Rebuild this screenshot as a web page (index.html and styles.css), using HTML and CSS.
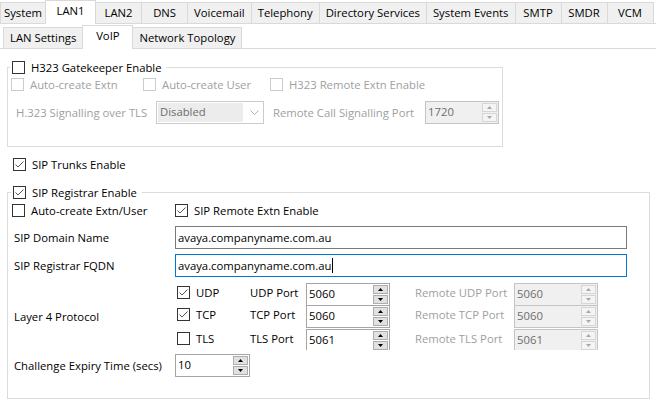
FILE: index.html
```html
<!DOCTYPE html>
<html lang="en">
<head>
    <meta charset="UTF-8">
    <title>LAN1 - VoIP</title>
    <link rel="stylesheet" href="styles.css">
</head>
<body>
    <div class="tabs tabs-top">
        <div class="tab first">System</div>
        <div class="tab sel">LAN1</div>
        <div class="tab">LAN2</div>
        <div class="tab">DNS</div>
        <div class="tab">Voicemail</div>
        <div class="tab">Telephony</div>
        <div class="tab">Directory Services</div>
        <div class="tab">System Events</div>
        <div class="tab">SMTP</div>
        <div class="tab">SMDR</div>
        <div class="tab">VCM</div>
    </div>
    <div class="tabs tabs-sub">
        <div class="tab">LAN Settings</div>
        <div class="tab sel">VoIP</div>
        <div class="tab">Network Topology</div>
    </div>

    <div class="page">
        <fieldset class="group group-h323">
            <legend><span class="check"><span class="cb"></span>H323 Gatekeeper Enable</span></legend>
            <div class="h323-opts">
                <span class="check off"><span class="cb"></span>Auto-create Extn</span>
                <span class="check off"><span class="cb"></span>Auto-create User</span>
                <span class="check off"><span class="cb"></span>H323 Remote Extn Enable</span>
            </div>
            <div class="h323-tls">
                <span class="lbl off tls-lbl">H.323 Signalling over TLS</span>
                <div class="combo">
                    <span class="combo-val">Disabled</span>
                    <svg class="chev" width="9" height="5" viewBox="0 0 9 5"><polyline points="0.5,0.5 4.5,4.5 8.5,0.5" fill="none" stroke="#b4b4b4"/></svg>
                </div>
                <span class="lbl off port-lbl">Remote Call Signalling Port</span>
                <div class="spin off spin-h323">
                    <span class="spin-val">1720</span>
                    <span class="spin-btns">
                        <span><svg width="5" height="3" viewBox="0 0 5 3"><polygon points="2.5,0 5,3 0,3"/></svg></span>
                        <span><svg width="5" height="3" viewBox="0 0 5 3"><polygon points="0,0 5,0 2.5,3"/></svg></span>
                    </span>
                </div>
            </div>
        </fieldset>

        <div class="trunks">
            <span class="check"><span class="cb"><svg width="11" height="11" viewBox="0 0 11 11"><polyline points="1.5,5.5 4,8 9.5,2.5" fill="none" stroke="#555"/></svg></span>SIP Trunks Enable</span>
        </div>

        <fieldset class="group group-sip">
            <legend><span class="check"><span class="cb"><svg width="11" height="11" viewBox="0 0 11 11"><polyline points="1.5,5.5 4,8 9.5,2.5" fill="none" stroke="#555"/></svg></span>SIP Registrar Enable</span></legend>

            <div class="sip-opts">
                <span class="check opt-auto"><span class="cb"></span>Auto-create Extn/User</span>
                <span class="check"><span class="cb"><svg width="11" height="11" viewBox="0 0 11 11"><polyline points="1.5,5.5 4,8 9.5,2.5" fill="none" stroke="#555"/></svg></span>SIP Remote Extn Enable</span>
            </div>

            <div class="field-row row-domain">
                <span class="lbl row-lbl">SIP Domain Name</span>
                <div class="field">avaya.companyname.com.au</div>
            </div>

            <div class="field-row row-fqdn">
                <span class="lbl row-lbl">SIP Registrar FQDN</span>
                <div class="field focus">avaya.companyname.com.au<span class="caret"></span></div>
            </div>

            <div class="field-row row-proto">
                <span class="lbl row-lbl">Layer 4 Protocol</span>
                <div class="proto">
                    <span class="check"><span class="cb"><svg width="11" height="11" viewBox="0 0 11 11"><polyline points="1.5,5.5 4,8 9.5,2.5" fill="none" stroke="#555"/></svg></span>UDP</span>
                    <span class="lbl">UDP Port</span>
                    <div class="spin">
                        <span class="spin-val">5060</span>
                        <span class="spin-btns">
                            <span><svg width="5" height="3" viewBox="0 0 5 3"><polygon points="2.5,0 5,3 0,3"/></svg></span>
                            <span><svg width="5" height="3" viewBox="0 0 5 3"><polygon points="0,0 5,0 2.5,3"/></svg></span>
                        </span>
                    </div>
                    <span class="lbl off">Remote UDP Port</span>
                    <div class="spin off">
                        <span class="spin-val">5060</span>
                        <span class="spin-btns">
                            <span><svg width="5" height="3" viewBox="0 0 5 3"><polygon points="2.5,0 5,3 0,3"/></svg></span>
                            <span><svg width="5" height="3" viewBox="0 0 5 3"><polygon points="0,0 5,0 2.5,3"/></svg></span>
                        </span>
                    </div>

                    <span class="check"><span class="cb"><svg width="11" height="11" viewBox="0 0 11 11"><polyline points="1.5,5.5 4,8 9.5,2.5" fill="none" stroke="#555"/></svg></span>TCP</span>
                    <span class="lbl">TCP Port</span>
                    <div class="spin">
                        <span class="spin-val">5060</span>
                        <span class="spin-btns">
                            <span><svg width="5" height="3" viewBox="0 0 5 3"><polygon points="2.5,0 5,3 0,3"/></svg></span>
                            <span><svg width="5" height="3" viewBox="0 0 5 3"><polygon points="0,0 5,0 2.5,3"/></svg></span>
                        </span>
                    </div>
                    <span class="lbl off">Remote TCP Port</span>
                    <div class="spin off">
                        <span class="spin-val">5060</span>
                        <span class="spin-btns">
                            <span><svg width="5" height="3" viewBox="0 0 5 3"><polygon points="2.5,0 5,3 0,3"/></svg></span>
                            <span><svg width="5" height="3" viewBox="0 0 5 3"><polygon points="0,0 5,0 2.5,3"/></svg></span>
                        </span>
                    </div>

                    <span class="check"><span class="cb"></span>TLS</span>
                    <span class="lbl">TLS Port</span>
                    <div class="spin">
                        <span class="spin-val">5061</span>
                        <span class="spin-btns">
                            <span><svg width="5" height="3" viewBox="0 0 5 3"><polygon points="2.5,0 5,3 0,3"/></svg></span>
                            <span><svg width="5" height="3" viewBox="0 0 5 3"><polygon points="0,0 5,0 2.5,3"/></svg></span>
                        </span>
                    </div>
                    <span class="lbl off">Remote TLS Port</span>
                    <div class="spin off">
                        <span class="spin-val">5061</span>
                        <span class="spin-btns">
                            <span><svg width="5" height="3" viewBox="0 0 5 3"><polygon points="2.5,0 5,3 0,3"/></svg></span>
                            <span><svg width="5" height="3" viewBox="0 0 5 3"><polygon points="0,0 5,0 2.5,3"/></svg></span>
                        </span>
                    </div>
                </div>
            </div>

            <div class="field-row row-chal">
                <span class="lbl row-lbl">Challenge Expiry Time (secs)</span>
                <div class="spin spin-chal">
                    <span class="spin-val">10</span>
                    <span class="spin-btns">
                        <span><svg width="5" height="3" viewBox="0 0 5 3"><polygon points="2.5,0 5,3 0,3"/></svg></span>
                        <span><svg width="5" height="3" viewBox="0 0 5 3"><polygon points="0,0 5,0 2.5,3"/></svg></span>
                    </span>
                </div>
            </div>
        </fieldset>
    </div>
</body>
</html>
```

FILE: styles.css
```css
body {
    margin: 0;
    width: 656px;
    height: 401px;
    overflow: hidden;
    background-color: #fff;
    font-family: "Open Sans", "Noto Sans", sans-serif;
    font-size: 11.3px;
    color: #000;
}

/* tab strips */
.tabs {
    display: flex;
    align-items: flex-end;
    border-bottom: 1px solid #d9d9d9;
}

.tabs-top {
    height: 23px;
}

.tabs-sub {
    height: 24px;
    padding-left: 3px;
}

.tab {
    height: 21px;
    min-width: 47px;
    box-sizing: border-box;
    border: 1px solid #d9d9d9;
    border-bottom: none;
    background-color: #f0f0f0;
    padding: 0 6px;
    margin-right: -1px;
    line-height: 19px;
    text-align: center;
    white-space: nowrap;
}

.tab.first {
    padding: 0 3px;
    min-width: 0;
}

.tab.sel {
    height: 24px;
    min-width: 51px;
    margin-bottom: -1px;
    background-color: #fff;
    line-height: 20px;
    position: relative;
    z-index: 1;
}

/* page body */
.page {
    padding-left: 7px;
}

.group {
    margin: 0;
    border: 1px solid #dcdcdc;
    min-width: 0;
    box-sizing: border-box;
}

.group legend {
    display: flex;
    align-items: center;
    height: 16px;
}

.check {
    display: inline-flex;
    align-items: center;
    white-space: nowrap;
}

.cb {
    width: 13px;
    height: 13px;
    box-sizing: border-box;
    border: 1px solid #333;
    background-color: #fff;
    margin-right: 6px;
    display: inline-flex;
    flex-shrink: 0;
}

.off {
    color: #a0a0a0;
}

.off .cb {
    border-color: #cccccc;
}

/* H323 box */
.group-h323 {
    margin-top: 10px;
    width: 496px;
    padding: 0 0 22px 2px;
}

.group-h323 legend {
    padding: 0 4px 0 2px;
}

.h323-opts {
    display: grid;
    grid-template-columns: 132px 127px auto;
    margin: 2px 0 0 1px;
    height: 15px;
}

.h323-tls {
    display: flex;
    align-items: center;
    margin-top: 9px;
}

.tls-lbl {
    width: 140px;
    margin-left: 6px;
}

.port-lbl {
    width: 152px;
    margin-left: 9px;
}

.combo {
    width: 108px;
    height: 23px;
    box-sizing: border-box;
    border: 1px solid #cccccc;
    display: flex;
    align-items: center;
    padding: 1px;
}

.combo-val {
    width: 85px;
    height: 19px;
    line-height: 18px;
    padding-left: 2px;
    box-sizing: border-box;
    background-color: #ececec;
    color: #6d6d6d;
}

.chev {
    margin-left: 7px;
}

/* spin boxes */
.spin {
    width: 84px;
    height: 23px;
    box-sizing: border-box;
    border: 1px solid #a5a5a5;
    background-color: #fff;
    display: flex;
    justify-content: space-between;
}

.spin-val {
    padding-left: 2px;
    line-height: 19px;
}

.spin-btns {
    display: flex;
    flex-direction: column;
    gap: 1px;
    width: 15px;
    margin: 1px 1px 0 0;
}

.spin-btns span {
    height: 9px;
    box-sizing: border-box;
    border: 1px solid #adadad;
    background-color: #e1e1e1;
    display: flex;
    align-items: center;
    justify-content: center;
}

.spin.off {
    background-color: #f0f0f0;
    border-color: #c4c4c4;
}

.spin.off .spin-val {
    color: #6d6d6d;
}

.spin.off .spin-btns span {
    border-color: #d6d6d6;
    background-color: #f4f4f4;
}

.spin.off polygon {
    fill: #a8a8a8;
}

.spin-h323 {
    width: 74px;
}

.spin-chal {
    width: 75px;
}

/* SIP */
.trunks {
    margin: 10px 0 0 6px;
    height: 15px;
    display: flex;
    align-items: center;
}

.group-sip {
    margin-top: 12px;
    width: 643px;
    padding: 0 0 21px 3px;
}

.group-sip legend {
    padding: 0 5px 0 2px;
}

.sip-opts {
    display: flex;
    align-items: center;
    height: 16px;
    margin: 2px 0 0 1px;
}

.opt-auto {
    width: 163px;
}

.field-row {
    display: flex;
    align-items: center;
}

.row-lbl {
    width: 161px;
    padding-left: 3px;
    white-space: nowrap;
}

.row-domain {
    margin-top: 8px;
}

.row-fqdn {
    margin-top: 5px;
}

.row-proto {
    margin-top: 6px;
}

.row-chal {
    margin-top: 4px;
}

.field {
    width: 452px;
    height: 23px;
    box-sizing: border-box;
    border: 1px solid #7a7a7a;
    padding-left: 2px;
    line-height: 20px;
    display: flex;
    align-items: center;
}

.field.focus {
    border-color: #0078d7;
}

.caret {
    width: 1px;
    height: 15px;
    background-color: #000;
    margin-left: 1px;
}

.proto {
    display: grid;
    grid-template-columns: 75px 56px 109px 99px 84px;
    grid-template-rows: 22px 24px 23px;
    align-items: start;
    height: 67px;
    overflow: hidden;
}

.proto .check {
    margin: 2px 0 0 2px;
    height: 15px;
}

.proto .lbl {
    line-height: 20px;
}
```
